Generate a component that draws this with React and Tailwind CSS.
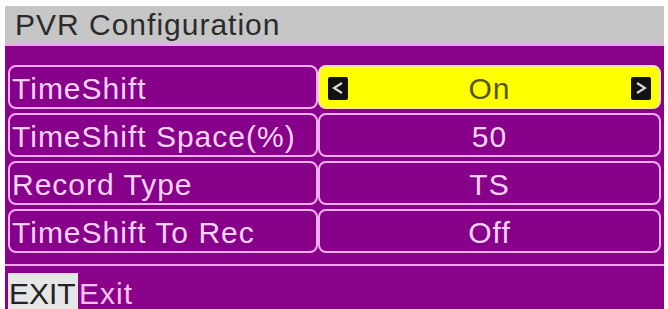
const rows = [
  { label: 'TimeShift', value: 'On', active: true },
  { label: 'TimeShift Space(%)', value: '50' },
  { label: 'Record Type', value: 'TS' },
  { label: 'TimeShift To Rec', value: 'Off' },
];

function Arrow({ dir }) {
  return (
    <div className="w-[20px] h-[23px] bg-[#111] rounded-[2px] flex items-center justify-center mt-[2px]">
      <svg width="12" height="14" viewBox="0 0 12 14">
        <polyline
          points={dir === 'left' ? '10,2 2,7 10,12' : '2,2 10,7 2,12'}
          fill="none"
          stroke="#d8d8d8"
          strokeWidth="2.2"
        />
      </svg>
    </div>
  );
}

export default function App() {
  return (
    <div
      className="w-[668px] h-[309px] bg-white overflow-hidden pt-[6px] pl-[5px] pr-[4px]"
      style={{ fontFamily: '"Liberation Sans", Arial, sans-serif' }}
    >
      {/* Title */}
      <div className="h-[38px] bg-[#c6c6c6] flex items-center pl-[10px] text-[30px] tracking-[1px] text-[#2b2b2b] leading-none">
        PVR Configuration
      </div>
      <div className="h-[2px] bg-[#f2a6f2]" />

      {/* Items */}
      <div className="bg-[#8a028a] px-[3px] pt-[19px] pb-[11px] flex flex-col gap-[4px]">
        {rows.map((r) => (
          <div key={r.label} className="flex h-[44px]">
            <div className="w-[310px] border-2 border-[#f3aef3] rounded-[8px] bg-[#87008a] flex items-center pl-[2px] pt-[4px] text-[30px] tracking-[1px] text-[#fbd4fb] leading-none">
              {r.label}
            </div>
            {r.active ? (
              <div className="flex-1 border-2 border-[#fbe0b0] rounded-[8px] bg-[#ffff00] flex items-center justify-between px-[8px]">
                <Arrow dir="left" />
                <span className="text-[30px] tracking-[1px] text-[#555510] leading-none pt-[4px]">{r.value}</span>
                <Arrow dir="right" />
              </div>
            ) : (
              <div className="flex-1 border-2 border-[#f3aef3] rounded-[8px] bg-[#87008a] flex items-center justify-center pt-[4px] text-[30px] tracking-[1px] text-[#fbd4fb] leading-none">
                {r.value}
              </div>
            )}
          </div>
        ))}
      </div>
      <div className="h-[2px] bg-[#f2a6f2]" />

      {/* Footer */}
      <div className="bg-[#8a028a] h-[60px] pl-[3px] pt-[7px] flex items-start">
        <div className="bg-[#e6e6e6] w-[70px] h-[40px] flex items-start pt-[6px] pl-[1px] text-[30px] text-[#222] leading-none">
          EXIT
        </div>
        <div className="pt-[6px] pl-[1px] text-[30px] tracking-[1px] text-[#f6c2f6] leading-none">Exit</div>
      </div>
    </div>
  );
}
